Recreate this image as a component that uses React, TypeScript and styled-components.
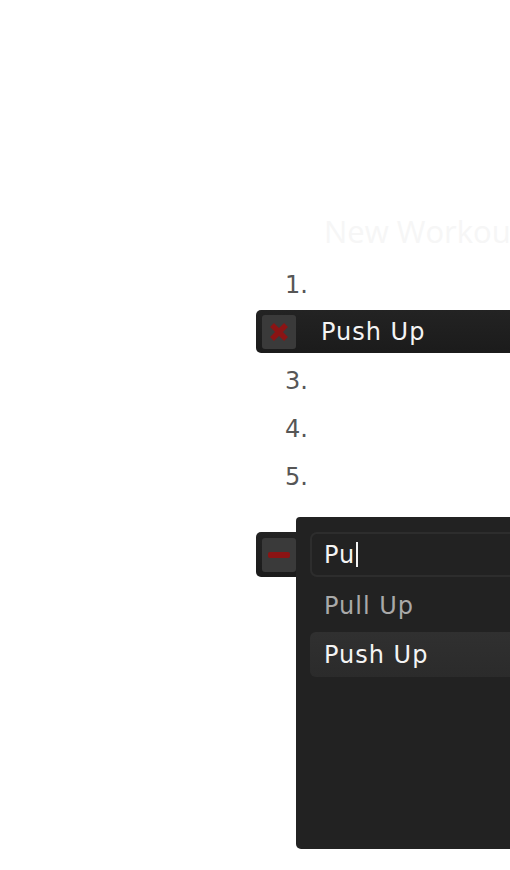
import React from 'react';
import styled, { createGlobalStyle } from 'styled-components';

const GlobalStyle = createGlobalStyle`
  html, body {
    margin: 0;
    padding: 0;
    background: #ffffff;
    overflow: hidden;
  }
`;

const Page = styled.div`
  padding-top: 213px;
  height: 870px;
  box-sizing: border-box;
`;

const Editor = styled.div`
  margin-left: 256px;
  width: 560px;
  font-family: 'DejaVu Sans', 'Noto Sans', sans-serif;
  font-size: 24px;
  letter-spacing: 1px;
`;

const Title = styled.h1`
  margin: 0 0 12px 68px;
  height: 36px;
  font: 400 31px/36px 'Open Sans', 'Liberation Sans', sans-serif;
  letter-spacing: 0;
  white-space: nowrap;
  color: #f6f6f6;
`;

const List = styled.div`
  display: flex;
  flex-direction: column;
`;

const NumberRow = styled.div`
  height: 48px;
  display: flex;
  align-items: center;
`;

const Num = styled.span`
  width: 52px;
  text-align: right;
  color: #565656;
  letter-spacing: 0;
`;

const BarRow = styled.div`
  height: 48px;
  padding-top: 1px;
  box-sizing: border-box;
`;

const Bar = styled.div<{ $tall?: boolean }>`
  height: ${p => (p.$tall ? 45 : 43)}px;
  display: flex;
  align-items: center;
  gap: 25px;
  padding: 0 6px;
  border-radius: 5px 0 0 5px;
  background: linear-gradient(#232323, #1b1b1b);
  color: #f4f4f4;
`;

const IconButton = styled.button`
  width: 34px;
  height: 34px;
  flex: none;
  padding: 0;
  border: none;
  border-radius: 3px;
  background: #3a3a3a;
  display: flex;
  align-items: center;
  justify-content: center;
`;

const EditRow = styled.div`
  position: relative;
  margin-top: 16px;
  padding-top: 15px;
  height: 332px;
  box-sizing: border-box;
`;

const Dropdown = styled.div`
  position: absolute;
  left: 40px;
  top: 0;
  width: 300px;
  height: 332px;
  box-sizing: border-box;
  padding: 15px 14px;
  background: #222222;
  border-radius: 4px 0 0 5px;
  display: flex;
  flex-direction: column;
  gap: 4px;
`;

const SearchBox = styled.div`
  height: 45px;
  box-sizing: border-box;
  border: 2px solid #2d2d2d;
  border-radius: 7px;
  padding-left: 12px;
  display: flex;
  align-items: center;
  color: #f4f4f4;
  margin-bottom: 2px;
`;

const Caret = styled.span`
  width: 2px;
  height: 25px;
  margin-left: 1px;
  background: #f4f4f4;
`;

const Option = styled.div<{ $active?: boolean }>`
  height: 45px;
  display: flex;
  align-items: center;
  padding-left: 14px;
  border-radius: 6px;
  color: ${p => (p.$active ? '#f4f4f4' : '#a9a9a9')};
  background: ${p => (p.$active ? 'linear-gradient(#303030, #2b2b2b)' : 'transparent')};
`;

const RemoveIcon = () => (
  <svg width="22" height="22" viewBox="0 0 22 22">
    <path d="M4 4 L18 18 M18 4 L4 18" stroke="#8b1414" strokeWidth="5.5" strokeLinecap="butt" />
  </svg>
);

const MinusIcon = () => (
  <svg width="22" height="6" viewBox="0 0 22 6">
    <rect x="0" y="0" width="22" height="6" rx="2" fill="#8b1414" />
  </svg>
);

export default function App() {
  return (
    <Page>
      <GlobalStyle />
      <Editor>
        <Title>New Workout</Title>
        <List>
          <NumberRow><Num>1.</Num></NumberRow>
          <BarRow>
            <Bar>
              <IconButton aria-label="remove"><RemoveIcon /></IconButton>
              <span>Push Up</span>
            </Bar>
          </BarRow>
          <NumberRow><Num>3.</Num></NumberRow>
          <NumberRow><Num>4.</Num></NumberRow>
          <NumberRow><Num>5.</Num></NumberRow>
          <EditRow>
            <Bar $tall>
              <IconButton aria-label="cancel"><MinusIcon /></IconButton>
            </Bar>
            <Dropdown>
              <SearchBox>Pu<Caret /></SearchBox>
              <Option>Pull Up</Option>
              <Option $active>Push Up</Option>
            </Dropdown>
          </EditRow>
        </List>
      </Editor>
    </Page>
  );
}
